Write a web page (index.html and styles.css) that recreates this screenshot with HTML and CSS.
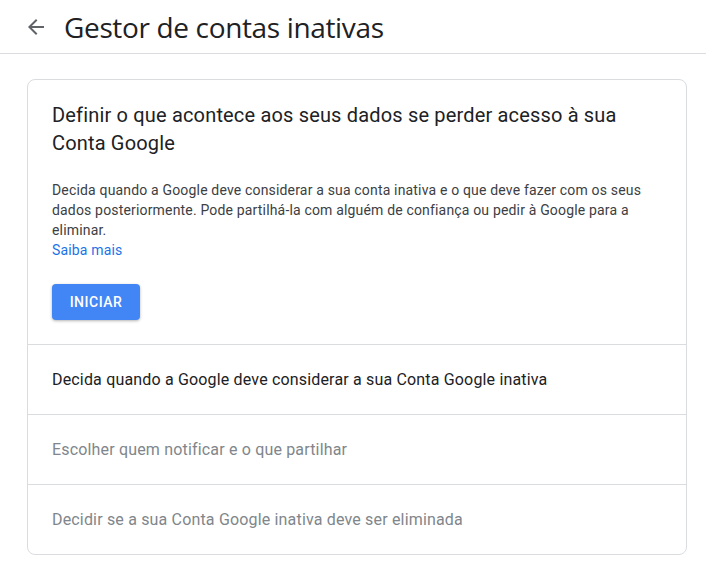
FILE: index.html
```html
<!DOCTYPE html>
<html lang="pt" dir="ltr">
  <head>
    <meta charset="utf-8">
    <title>Gestor de contas inativas</title>
    <link rel="stylesheet" href="styles.css">
  </head>
  <body>
    <header class="topo">
      <a class="voltar" href="#">
        <svg width="24" height="24" viewBox="0 0 24 24"><path d="M20 11H7.83l5.59-5.59L12 4l-8 8 8 8 1.41-1.41L7.83 13H20v-2z" fill="#5f6368"/></svg>
      </a>
      <h1>Gestor de contas inativas</h1>
    </header>
    <main class="cartao">
      <div class="intro">
        <h2>Definir o que acontece aos seus dados se perder acesso à sua Conta Google</h2>
        <p>Decida quando a Google deve considerar a sua conta inativa e o que deve fazer com os seus dados posteriormente. Pode partilhá-la com alguém de confiança ou pedir à Google para a eliminar.</p>
        <a class="saiba" href="#">Saiba mais</a>
        <div><button class="iniciar">Iniciar</button></div>
      </div>
      <div class="passo ativo">Decida quando a Google deve considerar a sua Conta Google inativa</div>
      <div class="passo">Escolher quem notificar e o que partilhar</div>
      <div class="passo">Decidir se a sua Conta Google inativa deve ser eliminada</div>
    </main>
  </body>
</html>
```

FILE: styles.css
```css
body{
  margin: 0;
  background-color: #fff;
  font-family: Roboto, "Liberation Sans", sans-serif;
  color: #202124;
  letter-spacing: 0.17px;
}
.topo{
  height: 53px;
  border-bottom: 1px solid #dadce0;
  display: flex;
  align-items: center;
  padding-left: 24px;
}
.voltar{
  display: flex;
  width: 24px;
  height: 24px;
  margin-right: 16px;
}
.topo h1{
  margin: 0;
  font-family: "Open Sans", Roboto, sans-serif;
  font-weight: 400;
  font-size: 28px;
  letter-spacing: -0.35px;
  color: #202124;
}
.cartao{
  margin: 25px 19px 0 27px;
  border: 1px solid #dadce0;
  border-radius: 8px;
}
.intro{
  padding: 21px 24px 24px 24px;
}
.intro h2{
  margin: 0 0 23px 0;
  font-size: 20px;
  font-weight: 400;
  line-height: 28px;
  color: #202124;
}
.intro p{
  margin: 0;
  font-size: 14px;
  line-height: 20px;
  color: #3c4043;
}
.saiba{
  font-size: 14px;
  line-height: 20px;
  color: #1a73e8;
  text-decoration: none;
}
.iniciar{
  margin-top: 24px;
  width: 88px;
  height: 36px;
  border: none;
  border-radius: 4px;
  background-color: #4285f4;
  color: #fff;
  font-family: Roboto, sans-serif;
  font-size: 14px;
  font-weight: 500;
  letter-spacing: 0.5px;
  text-transform: uppercase;
  box-shadow: 0 1px 3px rgba(0,0,0,0.3);
  cursor: pointer;
}
.passo{
  border-top: 1px solid #dadce0;
  height: 69px;
  display: flex;
  align-items: center;
  padding: 0 24px;
  font-size: 16px;
  color: #80868b;
}
.passo.ativo{
  color: #202124;
}
```
